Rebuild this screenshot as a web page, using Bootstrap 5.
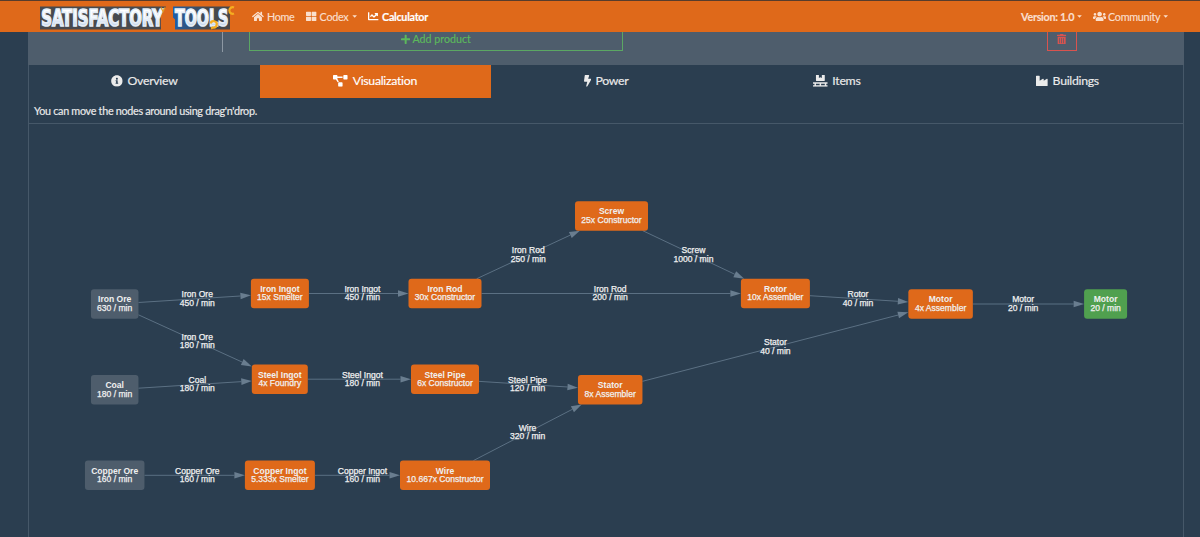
<!DOCTYPE html>
<html lang="en">
<head>
<meta charset="utf-8">
<meta name="viewport" content="width=device-width, initial-scale=1">
<title>Satisfactory Tools</title>
<link href="https://cdn.jsdelivr.net/npm/bootstrap@5.3.0/dist/css/bootstrap.min.css" rel="stylesheet">
<style>
  body { background: #2b3e50; color: #ebebeb; font-family: Lato, sans-serif; font-size: 10.8px; letter-spacing: -.3px; height: 537px; overflow: hidden; -webkit-text-stroke: .15px currentColor; }
  .fa-i { height: 1em; fill: currentColor; flex: none; }
  .topbar { background: #df691a; border-top: 1px solid #573c2c; height: 32px; padding: 0 32px 0 39px; }
  .topbar .nav-link { color: #fadfcd; padding: 0; line-height: 16px; gap: 3px; }
  .topbar .nav-link.active { color: #fff; font-weight: 700; }
  .topbar .fa-i { height: 10.6px; }
  .topbar .dropdown-toggle::after { border: 0; width: 4.6px; height: 2.6px; margin-left: 1px; background: currentColor; clip-path: polygon(0 0, 100% 0, 50% 100%); }
  .topbar .left-links { gap: 11.5px; }
  .topbar .right-links { gap: 11px; }
  .right-links .nav-link { gap: 2px; }
  .logo { width: 198px; height: 31px; margin-right: 15px; }
  .page { width: 1156px; margin-left: 28px; height: 505px; border: 1px solid #465869; border-width: 0 1px; }
  .panel { background: #4e5d6c; height: 33px; margin: 0 -1px; }
  .rule-v { width: 195px; height: 20px; border-right: 1px solid #8d98a3; }
  .btn-line { display: flex; align-items: center; justify-content: center; gap: 2px; border: 1px solid; border-top: 0; border-radius: 0; height: 19px; padding: 0 0 4px; font-size: 10.7px; line-height: 14px; }
  .btn-add { width: 374px; margin-left: 26px; color: #5cb85c; border-color: #5ba763; }
  .btn-del { width: 30px; margin-right: 107px; color: #d9534f; }
  .tabs .nav-link { color: #ebebeb; height: 33px; padding: 0 0 1px; border-radius: 0; font-size: 12.3px; gap: 4.5px; }
  .tabs .fa-i { height: 11.8px; }
  .tabs .nav-link.active { background: #df691a; color: #fff; }
  .hint { height: 26px; padding: 0 5px; line-height: 25px; border-bottom: 1px solid #465869; }
  .graph { width: 1154px; height: 413px; font: 8.55px "Liberation Sans", Arial, sans-serif; letter-spacing: 0; -webkit-text-stroke: 0; }
  .graph text { fill: #f0f0f0; text-anchor: middle; stroke: #f0f0f0; stroke-width: .25px; }
  .graph .ttl { font-weight: 700; stroke: none; }
  .graph line { stroke: #5b7083; stroke-width: 1; }
  .graph polygon { fill: #697d8f; }
</style>
</head>
<body>
<svg class="d-none">
  <symbol id="home" viewBox="0 0 576 512"><path d="M280.37 148.26L96 300.11V464a16 16 0 0 0 16 16l112.06-.29a16 16 0 0 0 15.92-16V368a16 16 0 0 1 16-16h64a16 16 0 0 1 16 16v95.64a16 16 0 0 0 16 16.05L464 480a16 16 0 0 0 16-16V300L295.67 148.26a12.19 12.19 0 0 0-15.3 0zM571.6 251.47L488 182.56V44.05a12 12 0 0 0-12-12h-56a12 12 0 0 0-12 12v72.61L318.47 43a48 48 0 0 0-61 0L4.34 251.47a12 12 0 0 0-1.6 16.9l25.5 31A12 12 0 0 0 45.15 301l235.22-193.74a12.19 12.19 0 0 1 15.3 0L530.9 301a12 12 0 0 0 16.9-1.6l25.5-31a12 12 0 0 0-1.7-16.93z"/></symbol>
  <symbol id="large" viewBox="0 0 512 512"><path d="M296 32h192c13.255 0 24 10.745 24 24v160c0 13.255-10.745 24-24 24H296c-13.255 0-24-10.745-24-24V56c0-13.255 10.745-24 24-24zm-80 0H24C10.745 32 0 42.745 0 56v160c0 13.255 10.745 24 24 24h192c13.255 0 24-10.745 24-24V56c0-13.255-10.745-24-24-24zM0 296v160c0 13.255 10.745 24 24 24h192c13.255 0 24-10.745 24-24V296c0-13.255-10.745-24-24-24H24c-13.255 0-24 10.745-24 24zm296 184h192c13.255 0 24-10.745 24-24V296c0-13.255-10.745-24-24-24H296c-13.255 0-24 10.745-24 24v160c0 13.255 10.745 24 24 24z"/></symbol>
  <symbol id="chart" viewBox="0 0 512 512"><path d="M496 384H64V80c0-8.84-7.16-16-16-16H16C7.16 64 0 71.16 0 80v336c0 17.67 14.33 32 32 32h464c8.84 0 16-7.16 16-16v-32c0-8.84-7.16-16-16-16zM464 96H345.94c-21.38 0-32.09 25.85-16.97 40.97l32.4 32.4L288 242.75l-73.37-73.37c-12.5-12.5-32.76-12.5-45.25 0l-68.69 68.69c-6.25 6.25-6.25 16.38 0 22.63l22.62 22.62c6.25 6.25 16.38 6.25 22.63 0L192 237.25l73.37 73.37c12.5 12.5 32.76 12.5 45.25 0l96-96 32.4 32.4c15.12 15.12 40.97 4.41 40.97-16.97V112c.01-8.84-7.15-16-15.99-16z"/></symbol>
  <symbol id="users" viewBox="0 0 640 512"><path d="M96 224c35.3 0 64-28.7 64-64s-28.7-64-64-64-64 28.7-64 64 28.7 64 64 64zm448 0c35.3 0 64-28.7 64-64s-28.7-64-64-64-64 28.7-64 64 28.7 64 64 64zm32 32h-64c-17.6 0-33.5 7.1-45.1 18.6 40.3 22.1 68.9 62 75.1 109.4h66c17.7 0 32-14.3 32-32v-32c0-35.3-28.7-64-64-64zm-256 0c61.9 0 112-50.1 112-112S381.9 32 320 32 208 82.1 208 144s50.1 112 112 112zm76.8 32h-8.3c-20.8 10-43.9 16-68.5 16s-47.6-6-68.5-16h-8.3C179.6 288 128 339.6 128 403.2V432c0 26.5 21.5 48 48 48h288c26.5 0 48-21.5 48-48v-28.8c0-63.6-51.6-115.2-115.2-115.2zm-223.7-13.4C161.5 263.1 145.6 256 128 256H64c-35.3 0-64 28.7-64 64v32c0 17.7 14.3 32 32 32h65.9c6.3-47.4 34.9-87.3 75.2-109.4z"/></symbol>
  <symbol id="plus" viewBox="0 0 448 512"><path d="M416 208H272V64c0-17.67-14.33-32-32-32h-32c-17.67 0-32 14.33-32 32v144H32c-17.67 0-32 14.33-32 32v32c0 17.67 14.33 32 32 32h144v144c0 17.67 14.33 32 32 32h32c17.67 0 32-14.33 32-32V304h144c17.67 0 32-14.33 32-32v-32c0-17.67-14.33-32-32-32z"/></symbol>
  <symbol id="trash" viewBox="0 0 448 512"><path d="M32 464a48 48 0 0 0 48 48h288a48 48 0 0 0 48-48V128H32zm272-256a16 16 0 0 1 32 0v224a16 16 0 0 1-32 0zm-96 0a16 16 0 0 1 32 0v224a16 16 0 0 1-32 0zm-96 0a16 16 0 0 1 32 0v224a16 16 0 0 1-32 0zM432 32H312l-9.4-18.7A24 24 0 0 0 281.1 0H166.8a23.72 23.72 0 0 0-21.4 13.3L136 32H16A16 16 0 0 0 0 48v32a16 16 0 0 0 16 16h416a16 16 0 0 0 16-16V48a16 16 0 0 0-16-16z"/></symbol>
  <symbol id="info" viewBox="0 0 512 512"><path d="M256 8C119.043 8 8 119.083 8 256c0 136.997 111.043 248 248 248s248-111.003 248-248C504 119.083 392.957 8 256 8zm0 110c23.196 0 42 18.804 42 42s-18.804 42-42 42-42-18.804-42-42 18.804-42 42-42zm56 254c0 6.627-5.373 12-12 12h-88c-6.627 0-12-5.373-12-12v-24c0-6.627 5.373-12 12-12h12v-64h-12c-6.627 0-12-5.373-12-12v-24c0-6.627 5.373-12 12-12h64c6.627 0 12 5.373 12 12v100h12c6.627 0 12 5.373 12 12v24z"/></symbol>
  <symbol id="diagram" viewBox="0 0 640 512"><path d="M384 320H256c-17.67 0-32 14.33-32 32v128c0 17.67 14.33 32 32 32h128c17.67 0 32-14.33 32-32V352c0-17.67-14.33-32-32-32zM192 32c0-17.67-14.33-32-32-32H32C14.33 0 0 14.33 0 32v128c0 17.67 14.33 32 32 32h95.72l73.16 128.04C211.98 300.98 232.4 288 256 288h.28L192 175.51V128h224V64H192V32zM608 0H480c-17.67 0-32 14.33-32 32v128c0 17.67 14.33 32 32 32h128c17.67 0 32-14.33 32-32V32c0-17.67-14.33-32-32-32z"/></symbol>
  <symbol id="bolt" viewBox="0 0 320 512"><path d="M296 160H180.6l42.6-129.8C227.2 15 215.7 0 200 0H56C44 0 33.8 8.9 32.2 20.8l-32 240C-1.7 275.2 9.5 288 24 288h118.7L96.6 482.5c-3.6 15.2 8 29.5 23.3 29.5 8.4 0 16.4-4.4 20.8-12l176-304c9.3-15.9-2.2-36-20.7-36z"/></symbol>
  <symbol id="pallet" viewBox="0 0 640 512"><path d="M144 256h352c8.8 0 16-7.2 16-16V16c0-8.8-7.2-16-16-16H384v128l-64-32-64 32V0H144c-8.8 0-16 7.2-16 16v224c0 8.8 7.2 16 16 16zm480 128c8.8 0 16-7.2 16-16v-32c0-8.8-7.2-16-16-16H16c-8.8 0-16 7.2-16 16v32c0 8.8 7.2 16 16 16h48v64H16c-8.8 0-16 7.2-16 16v32c0 8.8 7.2 16 16 16h608c8.8 0 16-7.2 16-16v-32c0-8.8-7.2-16-16-16h-48v-64h48zm-336 64H128v-64h160v64zm224 0H352v-64h160v64z"/></symbol>
  <symbol id="industry" viewBox="0 0 512 512"><path d="M475.115 163.781L336 252.309v-68.28c0-18.916-20.931-30.399-36.885-20.248L160 252.309V56c0-13.255-10.745-24-24-24H24C10.745 32 0 42.745 0 56v400c0 13.255 10.745 24 24 24h464c13.255 0 24-10.745 24-24V184.029c0-18.917-20.931-30.399-36.885-20.248z"/></symbol>
</svg>

<nav class="topbar d-flex align-items-center">
  <svg class="logo" viewBox="0 -2 198 31" overflow="visible">
    <defs>
      <linearGradient id="steel" x1="0" y1="0" x2="0" y2="1"><stop offset=".4" stop-color="#fff"/><stop offset=".85" stop-color="#b4cce8"/></linearGradient>
      <linearGradient id="plate" x1="0" x2="1"><stop offset="0" stop-color="#1f5fa8"/><stop offset=".6" stop-color="#46484c"/></linearGradient>
    </defs>
    <path d="M1 3.500h126l-5 9v14H1z" fill="#484a4e"/>
    <path d="M134 3.500h57v23h-55v-10l-2-2z" fill="url(#plate)"/>
    <g font-family="DejaVu Sans Condensed, DejaVu Sans, sans-serif" font-weight="700" font-size="23" letter-spacing="0" fill="url(#steel)" stroke="#e6eef7" stroke-width="1.700">
      <text transform="translate(2.200 23.200) scale(.685 1)" textLength="178" lengthAdjust="spacingAndGlyphs">SATISFACTORY</text>
      <text transform="translate(136 23.200) scale(.675 1)" textLength="79" lengthAdjust="spacingAndGlyphs">TOOLS</text>
    </g>
    <path d="M122 4.500l2 4 2-4" fill="none" stroke="#e59a25" stroke-width="1.300"/>
    <path d="M195 4.500a3.300 3.300 0 1 0 0 6M171.500 20.500a3.200 3.200 0 1 1 2.500 4l-2 1" fill="none" stroke="#f5ae20" stroke-width="2.200"/>
  </svg>
  <div class="nav left-links align-items-center flex-grow-1">
    <a class="nav-link d-flex align-items-center" href="#"><svg class="fa-i" viewBox="0 0 576 512"><use href="#home"/></svg>Home</a>
    <a class="nav-link dropdown-toggle d-flex align-items-center" href="#"><svg class="fa-i" viewBox="0 0 512 512"><use href="#large"/></svg>Codex</a>
    <a class="nav-link active d-flex align-items-center" href="#"><svg class="fa-i" viewBox="0 0 512 512"><use href="#chart"/></svg>Calculator</a>
  </div>
  <div class="nav right-links align-items-center">
    <a class="nav-link dropdown-toggle d-flex align-items-center fw-bold" href="#">Version: 1.0</a>
    <a class="nav-link dropdown-toggle d-flex align-items-center" href="#"><svg class="fa-i" viewBox="0 0 640 512"><use href="#users"/></svg>Community</a>
  </div>
</nav>

<main class="page">
  <div class="panel d-flex align-items-start">
    <div class="rule-v"></div>
    <button class="btn btn-line btn-add"><svg class="fa-i" viewBox="0 0 448 512"><use href="#plus"/></svg>Add product</button>
    <button class="btn btn-line btn-del ms-auto"><svg class="fa-i" viewBox="0 0 448 512"><use href="#trash"/></svg></button>
  </div>
  <div class="nav nav-fill tabs row row-cols-5 g-0">
    <a class="nav-link d-flex align-items-center justify-content-center" href="#"><svg class="fa-i" viewBox="0 0 512 512"><use href="#info"/></svg>Overview</a>
    <a class="nav-link active d-flex align-items-center justify-content-center" href="#"><svg class="fa-i" viewBox="0 0 640 512"><use href="#diagram"/></svg>Visualization</a>
    <a class="nav-link d-flex align-items-center justify-content-center" href="#"><svg class="fa-i" viewBox="0 0 320 512"><use href="#bolt"/></svg>Power</a>
    <a class="nav-link d-flex align-items-center justify-content-center" href="#"><svg class="fa-i" viewBox="0 0 640 512"><use href="#pallet"/></svg>Items</a>
    <a class="nav-link d-flex align-items-center justify-content-center" href="#"><svg class="fa-i" viewBox="0 0 512 512"><use href="#industry"/></svg>Buildings</a>
  </div>
  <div class="hint">You can move the nodes around using drag'n'drop.</div>
  <svg class="graph d-block" id="graph" viewBox="29 124 1154 413"></svg>
</main>

<script src="https://cdn.jsdelivr.net/npm/bootstrap@5.3.0/dist/js/bootstrap.bundle.min.js"></script>
<script>
  // id: [centre x, centre y, width, colour, title, detail]
  const grey = '#4e5d6c', orange = '#df691a', green = '#50a04f';
  const nodes = {
    ironOre:     [114.7, 304, 47.5, grey, 'Iron Ore', '630 / min'],
    coal:        [114.7, 389.7, 47.5, grey, 'Coal', '180 / min'],
    copperOre:   [114.7, 475.3, 59.5, grey, 'Copper Ore', '160 / min'],
    ironIngot:   [279.9, 293.5, 58, orange, 'Iron Ingot', '15x Smelter'],
    steelIngot:  [279.8, 379.2, 56, orange, 'Steel Ingot', '4x Foundry'],
    copperIngot: [279.9, 475.3, 70, orange, 'Copper Ingot', '5.333x Smelter'],
    ironRod:     [445, 293.5, 73, orange, 'Iron Rod', '30x Constructor'],
    steelPipe:   [445, 379.2, 68, orange, 'Steel Pipe', '6x Constructor'],
    wire:        [445, 475.3, 90, orange, 'Wire', '10.667x Constructor'],
    screw:       [611.5, 215.9, 73, orange, 'Screw', '25x Constructor'],
    stator:      [610.2, 389.7, 64.5, orange, 'Stator', '8x Assembler'],
    rotor:       [775.4, 293.5, 69, orange, 'Rotor', '10x Assembler'],
    motor:       [940.6, 304, 64.5, orange, 'Motor', '4x Assembler'],
    product:     [1105.6, 304, 43, green, 'Motor', '20 / min']
  };
  const edges = [
    ['ironOre', 'ironIngot', 'Iron Ore', '450 / min'],
    ['ironOre', 'steelIngot', 'Iron Ore', '180 / min'],
    ['coal', 'steelIngot', 'Coal', '180 / min'],
    ['copperOre', 'copperIngot', 'Copper Ore', '160 / min'],
    ['ironIngot', 'ironRod', 'Iron Ingot', '450 / min'],
    ['steelIngot', 'steelPipe', 'Steel Ingot', '180 / min'],
    ['copperIngot', 'wire', 'Copper Ingot', '160 / min'],
    ['ironRod', 'screw', 'Iron Rod', '250 / min'],
    ['ironRod', 'rotor', 'Iron Rod', '200 / min'],
    ['screw', 'rotor', 'Screw', '1000 / min'],
    ['steelPipe', 'stator', 'Steel Pipe', '120 / min'],
    ['wire', 'stator', 'Wire', '320 / min'],
    ['rotor', 'motor', 'Rotor', '40 / min'],
    ['stator', 'motor', 'Stator', '40 / min'],
    ['motor', 'product', 'Motor', '20 / min']
  ];
  const H = 29.5;
  // distance from a node's centre to its border along a direction
  const reach = (n, ux, uy) => Math.min(n[2] / 2 / Math.abs(ux), H / 2 / Math.abs(uy || 1e-9));
  let lines = '', labels = '', boxes = '';
  for (const [from, to, name, rate] of edges) {
    const a = nodes[from], b = nodes[to];
    const dx = b[0] - a[0], dy = b[1] - a[1], len = Math.hypot(dx, dy), ux = dx / len, uy = dy / len;
    const ra = reach(a, ux, uy), rb = reach(b, ux, uy);
    const sx = a[0] + ux * ra, sy = a[1] + uy * ra, tx = b[0] - ux * rb, ty = b[1] - uy * rb;
    const bx = tx - ux * 10.5, by = ty - uy * 10.5;
    lines += `<line x1="${sx}" y1="${sy}" x2="${bx}" y2="${by}"/><polygon points="${tx},${ty} ${bx - uy * 3.3},${by + ux * 3.3} ${bx + uy * 3.3},${by - ux * 3.3}"/>`;
    const mx = (a[0] + b[0]) / 2, my = (a[1] + b[1]) / 2;
    labels += `<text x="${mx}" y="${my - 1.7}">${name}</text><text x="${mx}" y="${my + 6.8}">${rate}</text>`;
  }
  for (const [x, y, w, fill, title, detail] of Object.values(nodes))
    boxes += `<rect x="${x - w / 2}" y="${y - H / 2}" width="${w}" height="${H}" rx="3" fill="${fill}"/><text class="ttl" x="${x}" y="${y - 1.7}">${title}</text><text x="${x}" y="${y + 6.8}">${detail}</text>`;
  document.getElementById('graph').innerHTML = lines + boxes + labels;
</script>
</body>
</html>
